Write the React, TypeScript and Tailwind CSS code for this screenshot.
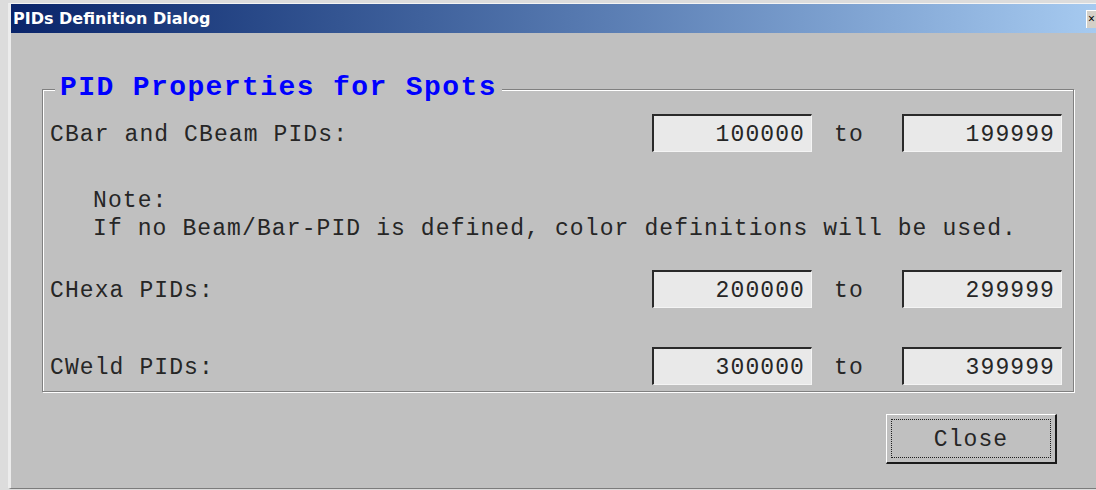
import React from "react";

const mono = { fontFamily: '"Liberation Mono", "Courier New", monospace' };

function NumField({ value }: { value: string }) {
  return (
    <div className="box-border flex h-[38px] w-[160px] items-center justify-end border-t-2 border-l-2 border-b border-r border-t-[#2a2a2a] border-l-[#2a2a2a] border-b-[#f4f4f4] border-r-[#f4f4f4] bg-[#e9e9e9] pr-[6px] pt-[3px] text-[23px] tracking-[1.1px] text-[#262626]">
      {value}
    </div>
  );
}

function RangeRow({ label, from, to, className = "" }: { label: string; from: string; to: string; className?: string }) {
  return (
    <div className={`flex items-center ${className}`}>
      <div className="flex-1 pt-[4px] text-[23px] tracking-[1.1px] text-[#262626]">{label}</div>
      <NumField value={from} />
      <div className="w-[90px] pl-[22px] pt-[4px] text-[23px] tracking-[1.1px] text-[#262626]">to</div>
      <NumField value={to} />
    </div>
  );
}

export default function App() {
  return (
    <div className="h-[490px] w-[1096px] overflow-hidden bg-[#dcdcdc] pl-[8px] pt-[3px]">
      <div className="flex h-[486px] w-[1088px] flex-col border-l-[3px] border-t border-b border-l-[#ececec] border-t-[#f4f4f4] border-b-[#7c7c7c]">
        {/* title bar */}
        <div className="flex h-[29px] items-center bg-gradient-to-r from-[#0a246a] to-[#a6caf0] pl-[2px]">
          <span
            className="pt-[1px] text-[16px] font-bold text-white"
            style={{ fontFamily: '"DejaVu Sans", Tahoma, sans-serif' }}
          >
            PIDs Definition Dialog
          </span>
          <div className="ml-auto flex h-[18px] w-[10px] items-center justify-start border-t border-l border-t-white border-l-white bg-[#d4d0c8] pl-[1px] text-[12px] leading-none text-black">
            ×
          </div>
        </div>

        {/* dialog body */}
        <div className="flex-1 bg-[#c0c0c0] pl-[31px] pt-[56px]" style={mono}>
          <div className="flex w-[1032px] flex-col">
            {/* group box */}
            <div className="relative border border-[#808080] pb-[5px] pl-[7px] pr-[11px] pt-[24px] shadow-[inset_1px_1px_0_#ffffff,1px_1px_0_#ffffff]">
              <div className="absolute left-[12px] top-[-18px] bg-[#c0c0c0] pl-[5px] pr-[5px] text-[28px] font-bold leading-[32px] tracking-[1.4px] text-[#0000ff]">
                PID Properties for Spots
              </div>

              <RangeRow label="CBar and CBeam PIDs:" from="100000" to="199999" />

              <div className="mt-[34px] pl-[43px] text-[23px] leading-[28px] tracking-[1.1px] text-[#262626]">
                <div>Note:</div>
                <div>If no Beam/Bar-PID is defined, color definitions will be used.</div>
              </div>

              <RangeRow label="CHexa PIDs:" from="200000" to="299999" className="mt-[27px]" />
              <RangeRow label="CWeld PIDs:" from="300000" to="399999" className="mt-[39px]" />
            </div>

            {/* buttons */}
            <div className="mt-[22px] flex justify-end pr-[17px]">
              <div className="box-border flex h-[50px] w-[171px] items-center justify-center border-t border-l border-t-white border-l-white border-b-2 border-r-2 border-b-[#1a1a1a] border-r-[#1a1a1a] bg-[#c0c0c0] p-[4px]">
                <div className="flex h-full w-full items-center justify-center border border-dotted border-[#202020] pt-[4px] text-[23px] tracking-[1.1px] text-[#262626]">
                  Close
                </div>
              </div>
            </div>
          </div>
        </div>
      </div>
    </div>
  );
}
